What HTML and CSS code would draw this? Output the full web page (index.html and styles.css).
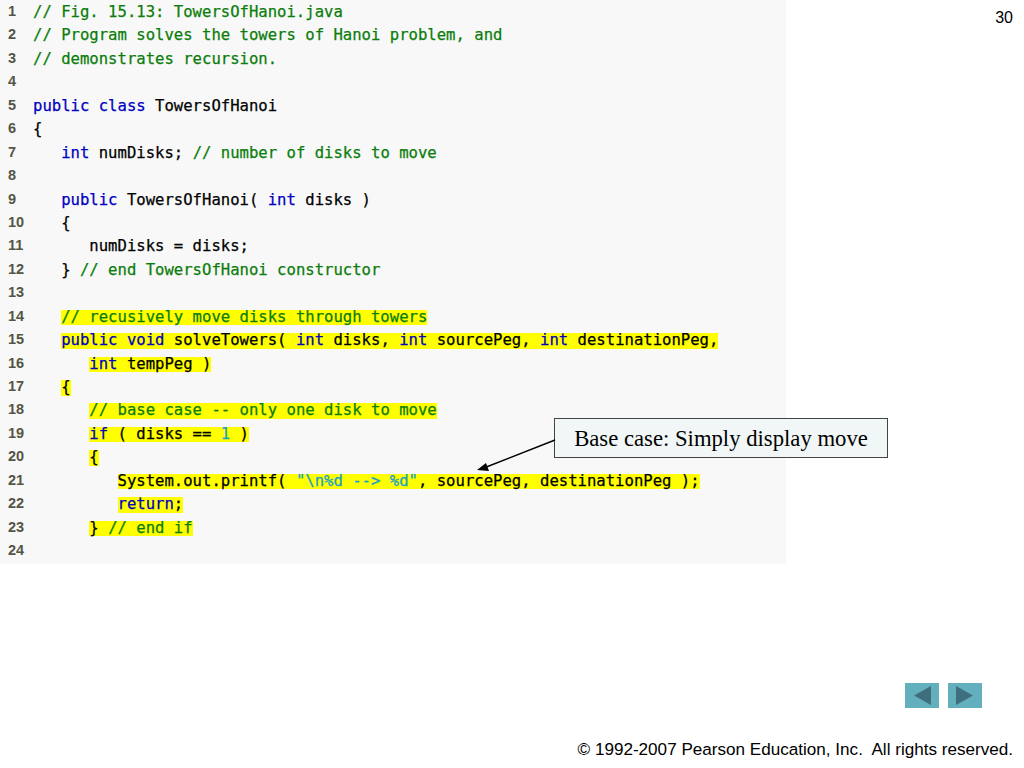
FILE: index.html
```html
<!DOCTYPE html>
<html lang="en">
<head>
<meta charset="utf-8">
<title>TowersOfHanoi.java</title>
<link rel="stylesheet" href="styles.css">
</head>
<body>
<div class="slide">
  <header class="top">
    <main class="panel">
      <ol class="nums"><li>1</li><li>2</li><li>3</li><li>4</li><li>5</li><li>6</li><li>7</li><li>8</li><li>9</li><li>10</li><li>11</li><li>12</li><li>13</li><li>14</li><li>15</li><li>16</li><li>17</li><li>18</li><li>19</li><li>20</li><li>21</li><li>22</li><li>23</li><li>24</li></ol>
      <div class="code">
<div class="ln"><span class="c">// Fig. 15.13: TowersOfHanoi.java</span></div>
<div class="ln"><span class="c">// Program solves the towers of Hanoi problem, and</span></div>
<div class="ln"><span class="c">// demonstrates recursion.</span></div>
<div class="ln"> </div>
<div class="ln"><span class="k">public class</span> TowersOfHanoi</div>
<div class="ln">{</div>
<div class="ln">   <span class="k">int</span> numDisks; <span class="c">// number of disks to move</span></div>
<div class="ln"> </div>
<div class="ln">   <span class="k">public</span> TowersOfHanoi( <span class="k">int</span> disks )</div>
<div class="ln">   {</div>
<div class="ln">      numDisks = disks;</div>
<div class="ln">   } <span class="c">// end TowersOfHanoi constructor</span></div>
<div class="ln"> </div>
<div class="ln">   <span class="hl"><span class="c">// recusively move disks through towers</span></span></div>
<div class="ln">   <span class="hl"><span class="k">public void</span> solveTowers( <span class="k">int</span> disks, <span class="k">int</span> sourcePeg, <span class="k">int</span> destinationPeg,</span></div>
<div class="ln">      <span class="hl"><span class="k">int</span> tempPeg )</span></div>
<div class="ln">   <span class="hl">{</span></div>
<div class="ln">      <span class="hl"><span class="c">// base case -- only one disk to move</span></span></div>
<div class="ln">      <span class="hl"><span class="k">if</span> ( disks == <span class="n">1</span> )</span></div>
<div class="ln">      <span class="hl">{</span></div>
<div class="ln">         <span class="hl">System.out.printf( <span class="n">"\n%d --&gt; %d"</span>, sourcePeg, destinationPeg );</span></div>
<div class="ln">         <span class="hl"><span class="k">return</span>;</span></div>
<div class="ln">      <span class="hl">} <span class="c">// end if</span></span></div>
<div class="ln"> </div>
      </div>
    </main>
    <div class="page">30</div>
  </header>
  <nav class="nav">
    <span class="btn"><svg width="34" height="25" viewBox="0 0 34 25"><path d="M9 12.5 26 3v19z"/></svg></span>
    <span class="btn"><svg width="34" height="25" viewBox="0 0 34 25"><path d="M25 12.5 8 3v19z"/></svg></span>
  </nav>
  <footer class="foot">© 1992-2007 Pearson Education, Inc.&nbsp; All rights reserved.</footer>
  <div class="callout">Base case: Simply display move</div>
  <svg class="arrow" width="80" height="34" viewBox="0 0 80 34"><path d="M78 2 8 29.5" stroke="#000" stroke-width="1.4" fill="none"/><path d="M0 32 9 25l3 8z" fill="#000"/></svg>
</div>
</body>
</html>
```
FILE: styles.css
```css
html, body { margin: 0; padding: 0; background: #fff; }
.slide { position: relative; width: 1024px; height: 768px; display: flex; flex-direction: column; overflow: hidden; font-family: "Liberation Sans", Arial, sans-serif; }
.top { display: flex; justify-content: space-between; align-items: flex-start; height: 683px; }
.panel { display: flex; width: 786px; height: 564px; background: #f8f8f8; box-sizing: border-box; }
.nums { list-style: none; margin: 0; padding: 0 0 0 8px; width: 25px; font-weight: bold; font-size: 14.5px; color: #555544; }
.nums li { height: 23.45px; line-height: 23.45px; }
.code { font-family: "DejaVu Sans Mono", monospace; font-size: 15.6px; color: #000; -webkit-text-stroke: 0.25px; padding-top: 1px; }
.ln { height: 23.45px; line-height: 23.45px; white-space: pre; }
.c { color: #0a7d0a; }
.k { color: #0000c0; }
.n { color: #1aa0c8; }
.hl { display: inline-block; background: #ffff00; line-height: 15.5px; height: 15.5px; vertical-align: 0; }
.page { font-size: 16px; margin: 9px 11px 0 0; color: #000; }
.nav { display: flex; gap: 9px; justify-content: flex-end; padding-right: 42px; height: 25px; }
.btn { display: block; width: 34px; height: 25px; background: #64afbd; }
.btn svg { display: block; }
.btn path { fill: #3f6f7f; }
.foot { margin-top: 33px; text-align: right; padding-right: 11px; font-size: 17.1px; line-height: 18px; color: #000; }
.callout { position: absolute; left: 554px; top: 418px; width: 334px; height: 40px; box-sizing: border-box; border: 1px solid #444; background: #f1f7f7; font-family: "Liberation Serif", serif; font-size: 22.7px; line-height: 39px; text-align: center; color: #000; }
.arrow { position: absolute; left: 477px; top: 438px; }
```
